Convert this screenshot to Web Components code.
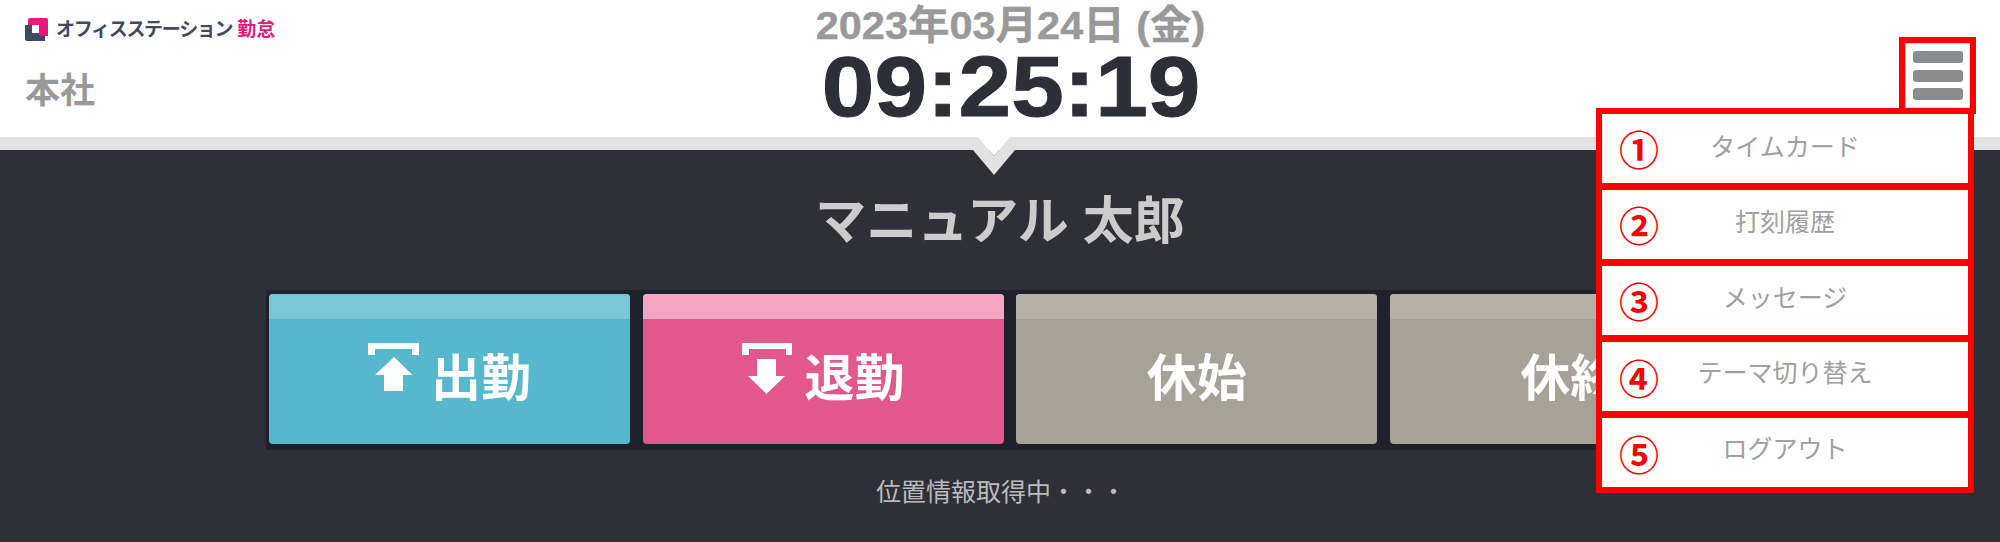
<!DOCTYPE html>
<html lang="ja"><head><meta charset="utf-8"><title>打刻</title>
<style>
html,body{margin:0;padding:0;background:#2f2f38;}
body{width:2000px;height:542px;overflow:hidden;position:relative;font-family:"Liberation Sans","Noto Sans CJK JP",sans-serif;}
</style></head><body>
<kintai-header></kintai-header>
<punch-panel></punch-panel>
<side-menu>
<menu-row num="①" dy="-1">タイムカード</menu-row>
<menu-row num="②" dy="-2">打刻履歴</menu-row>
<menu-row num="③" dy="-2">メッセージ</menu-row>
<menu-row num="④" dy="-4">テーマ切り替え</menu-row>
<menu-row num="⑤" dy="-4">ログアウト</menu-row>
</side-menu>
<script>
const cjk='"Liberation Sans","Noto Sans CJK JP",sans-serif';
class KintaiHeader extends HTMLElement{constructor(){super();this.attachShadow({mode:'open'}).innerHTML=`
<style>
:host{display:block;height:150px;box-sizing:border-box;background:#fff;border-bottom:13px solid #e2e2e2;position:relative;font-family:${cjk};}
.row{display:grid;grid-template-columns:1fr auto 1fr;height:137px;}
.left{padding:18px 0 0 25px;display:flex;flex-direction:column;}
.logo{display:flex;align-items:center;height:23px;white-space:nowrap;}
.logo svg{margin-right:8px;flex:none;}
.brand{font-size:19px;font-weight:700;letter-spacing:-1.3px;color:#3f4a63;line-height:23px;}
.kt{font-size:19px;font-weight:700;color:#e6197a;margin-left:5px;line-height:23px;}
.site{font-size:35px;font-weight:700;color:#999;line-height:40px;margin-top:30px;}
.mid{display:flex;flex-direction:column;align-items:center;padding-left:22px;}
.date{font-size:39.5px;font-weight:700;color:#999;line-height:40px;margin-top:5px;white-space:nowrap;transform:scaleX(1.05);-webkit-text-stroke:.4px #999;}
.time{font-size:86px;font-weight:700;color:#2d2f38;line-height:82px;white-space:nowrap;transform:scaleX(1.1);-webkit-text-stroke:1px #2d2f38;}
.right{display:flex;justify-content:flex-end;padding:37px 24px 0 0;}
.burger{box-sizing:border-box;width:77px;height:77px;border:6px solid #f00;display:flex;}
.burger div{flex:1;border:1px solid #ddd;display:flex;flex-direction:column;justify-content:center;align-items:center;gap:6.5px;}
.burger i{display:block;width:50px;height:12px;background:#8a8d90;border-radius:3px;}
.notch{position:absolute;left:973px;top:137px;width:42px;height:38px;}
</style>
<div class="row">
<div class="left">
<div class="logo"><svg width="23" height="23" viewBox="0 0 23 23"><path d="M0 7H7V15H14V18H20V23H2a2 2 0 0 1-2-2z" fill="#3f4a63"/><path d="M3 2a2 2 0 0 1 2-2H21a2 2 0 0 1 2 2V18H14V7H3z" fill="#e6197a"/></svg><span class="brand">オフィスステーション</span><span class="kt">勤怠</span></div>
<div class="site">本社</div>
</div>
<div class="mid"><div class="date">2023年03月24日 (金)</div><div class="time">09:25:19</div></div>
<div class="right"><div class="burger"><div><i></i><i></i><i></i></div></div></div>
</div>
<svg class="notch" viewBox="0 0 42 38"><path d="M0 13H5L5 0 L21 19 L37 0 L37 13H42L21 38Z" fill="#e2e2e2"/><path d="M5 0H37L21 19Z" fill="#fff"/></svg>`;}}
customElements.define('kintai-header',KintaiHeader);

class PunchButton extends HTMLElement{constructor(){super();
const c=this.getAttribute('color'),l=this.getAttribute('light'),ic=this.getAttribute('icon');
const up='<path d="M0 0h51v12h-7V6H7v6H0z" fill="#fff"/><path d="M26 14L44.5 32H35V48H16V32H7z" fill="#fff"/>';
const down='<path d="M0 0h50v12h-6V6H7v6H0z" fill="#fff"/><path d="M15 16H34V33H43L24.5 51 6 33H15z" fill="#fff"/>';
const svg=ic?`<svg width="51" height="51" viewBox="0 0 51 51">${ic==='up'?up:down}</svg>`:'';
this.attachShadow({mode:'open'}).innerHTML=`
<style>
:host{display:flex;flex:none;width:361px;height:150px;box-sizing:border-box;border-radius:4px;overflow:hidden;flex-direction:column;background:${c};position:relative;}
.band{height:25px;background:${l};flex:none;}
.body{flex:1;display:flex;justify-content:center;align-items:flex-start;padding-top:24px;gap:12px;}
svg{flex:none;}
span{font:700 50px/1 ${cjk};color:#fff;margin-top:11px;}
</style><div class="band"></div><div class="body">${svg}<span><slot></slot></span></div>`;}}
customElements.define('punch-button',PunchButton);

class PunchPanel extends HTMLElement{constructor(){super();this.attachShadow({mode:'open'}).innerHTML=`
<style>
:host{display:block;font-family:${cjk};}
h1{margin:0;text-align:center;font-size:51px;font-weight:700;color:#ccc;line-height:60px;padding-top:42px;}
.strip{display:flex;gap:12.6px;box-sizing:border-box;width:1488px;margin:38px 0 0 266px;padding:4px 3px 6px;background:#1f212c;}
p{margin:0;text-align:center;font-size:25px;color:#bbb;line-height:32px;padding-top:26px;padding-left:2px;}
</style>
<h1>マニュアル 太郎</h1>
<div class="strip">
<punch-button color="#56b8cc" light="#79c6d6" icon="up">出勤</punch-button>
<punch-button color="#e3588c" light="#f4a5c2" icon="down">退勤</punch-button>
<punch-button color="#a6a295" light="#b4b0a4">休始</punch-button>
<punch-button color="#a6a295" light="#b4b0a4">休終</punch-button>
</div>
<p>位置情報取得中・・・</p>`;}}
customElements.define('punch-panel',PunchPanel);

class SideMenu extends HTMLElement{constructor(){super();this.attachShadow({mode:'open'}).innerHTML=`
<style>:host{position:absolute;left:1596px;top:108px;width:378px;box-sizing:border-box;border:6px solid #f00;display:flex;flex-direction:column;gap:7.5px;background:#f00;}</style><slot></slot>`;}}
customElements.define('side-menu',SideMenu);

class MenuRow extends HTMLElement{constructor(){super();
this.attachShadow({mode:'open'}).innerHTML=`
<style>
:host{display:grid;grid-template-columns:76px 1fr 76px;height:68.6px;background:#fff;align-items:center;font-family:${cjk};}
b{font:700 40px/1 "Noto Sans CJK JP",sans-serif;color:#f00;justify-self:start;margin-left:17px;width:40px;text-align:center;}
span{text-align:center;font-size:25px;color:#a0a0a0;margin-top:${2*(+this.getAttribute('dy')||0)}px;line-height:30px;}
</style><b>${this.getAttribute('num')}</b><span><slot></slot></span><i></i>`;}}
customElements.define('menu-row',MenuRow);
</script>
</body></html>
